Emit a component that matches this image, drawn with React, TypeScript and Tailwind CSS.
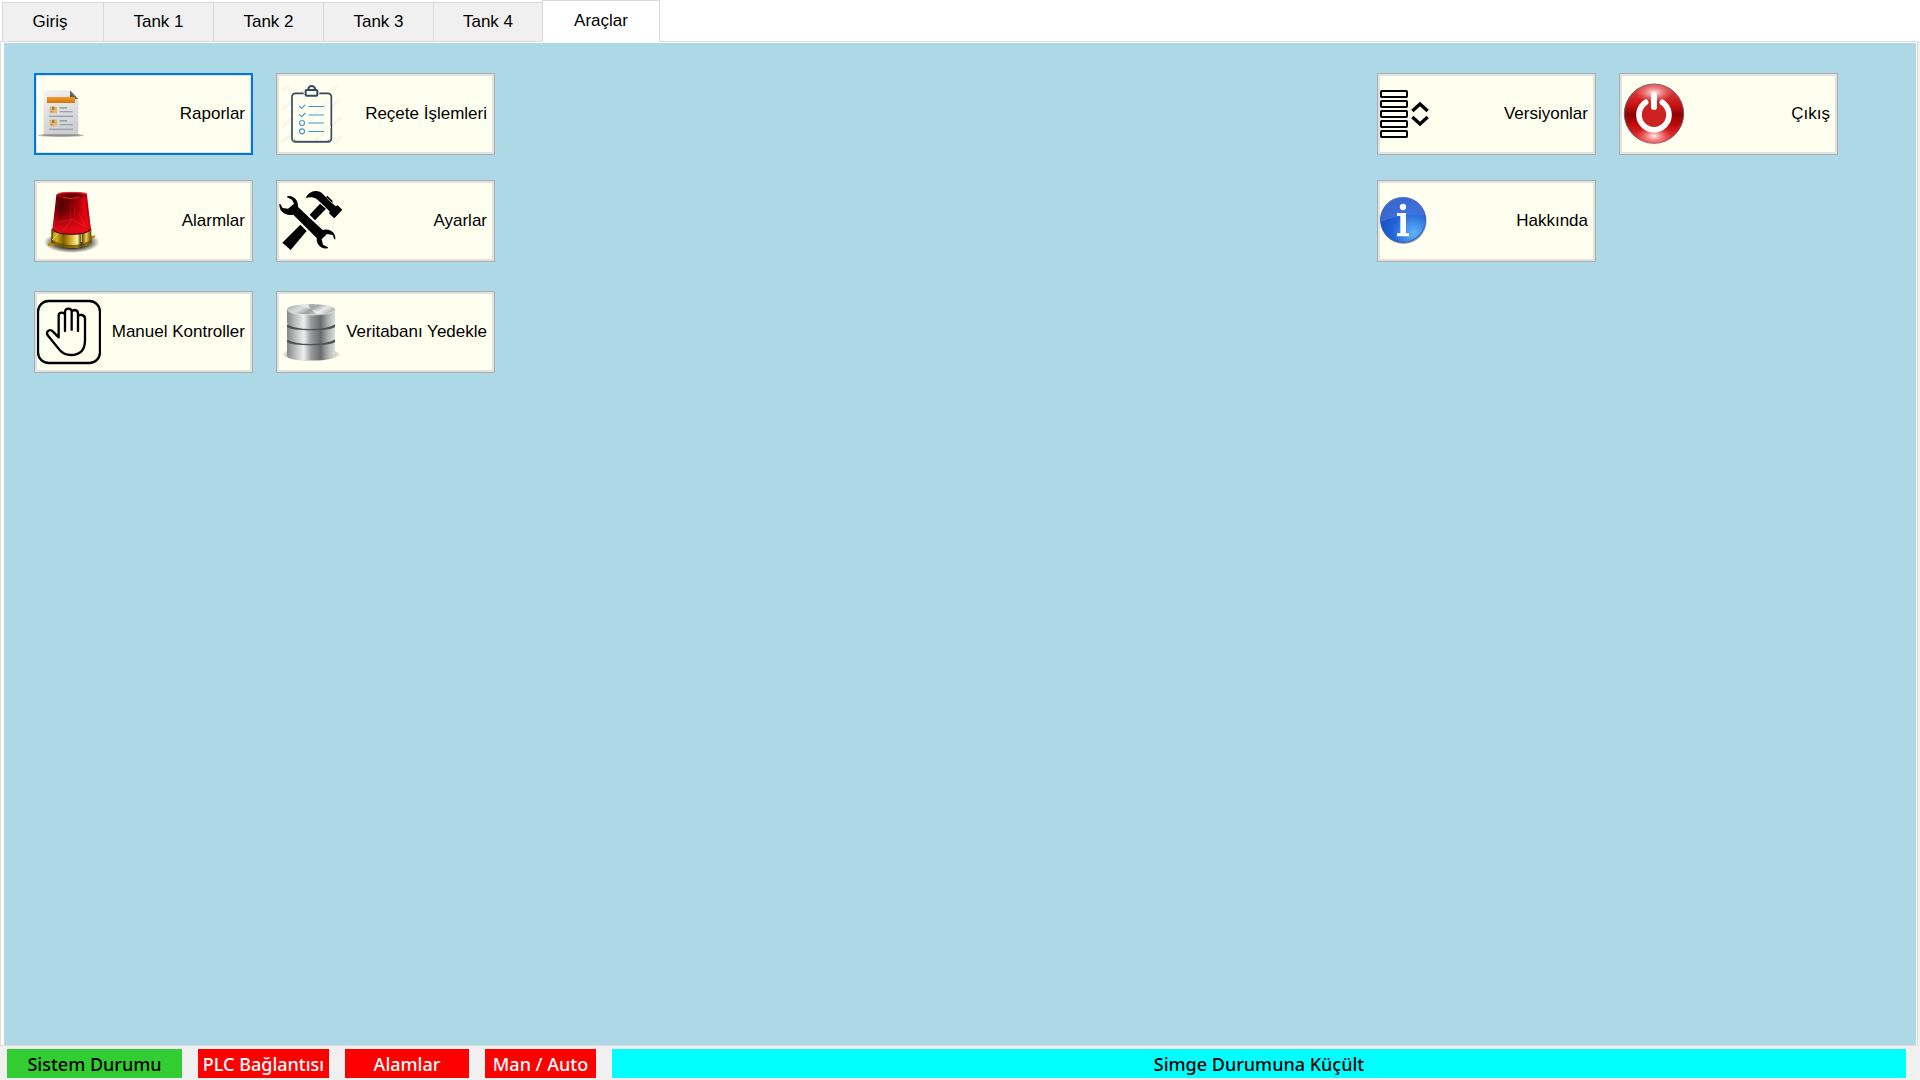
import React from "react";

const ICON = "h-[76px] w-16 shrink-0";

function ReportIcon() {
  return (
    <svg className={ICON} viewBox="39 36 192 228" aria-hidden="true">
      <defs>
        <linearGradient id="rp-paper" x1="0" y1="0" x2="0.3" y2="1">
          <stop offset="0" stopColor="#f3f3f3" />
          <stop offset="1" stopColor="#cfcfd1" />
        </linearGradient>
        <linearGradient id="rp-bar" x1="0" y1="0" x2="0" y2="1">
          <stop offset="0" stopColor="#f09a2c" />
          <stop offset="1" stopColor="#d17a08" />
        </linearGradient>
        <linearGradient id="rp-fold" x1="0" y1="1" x2="1" y2="0">
          <stop offset="0" stopColor="#444" />
          <stop offset="1" stopColor="#999" />
        </linearGradient>
      </defs>
      <ellipse cx="111" cy="214" rx="69" ry="5" fill="#b9b9b4" />
      <ellipse cx="111" cy="213" rx="58" ry="4" fill="#8f8f8c" />
      <path d="M59 84q0-5 5-5h74l25 25v103q0 4-4 4H63q-4 0-4-4z" fill="url(#rp-paper)" />
      <path d="M138 79l25 26h-25z" fill="url(#rp-fold)" />
      <rect x="69" y="99" width="84" height="18" fill="url(#rp-bar)" />
      {[128, 167].map((y) => (
        <g key={y}>
          <rect x="77" y={y} width="22" height="20" rx="2" fill="#e2b775" />
          <rect x="84" y={y} width="7" height="10" fill="#a67a3c" />
          <rect x="80" y={y + 13} width="5" height="4" fill="#a68450" />
          <g fill="#93a5ac">
            <rect x="107" y={y + 1} width="22" height="5" />
            <rect x="107" y={y + 13} width="39" height="4" />
            <rect x="75" y={y + 27} width="72" height="4" />
          </g>
        </g>
      ))}
    </svg>
  );
}

function RecipeIcon() {
  return (
    <svg className={ICON} viewBox="39 36 192 228" fill="none" aria-hidden="true">
      <path
        d="M48 82l20-18M48 138l84-76M48 190l84-80M48 236L216 64M180 150l40-44M180 202l46-44M206 240l20-22"
        stroke="#f6f6e9"
        strokeWidth="10"
      />
      <rect x="78" y="88" width="118" height="146" rx="10" fill="#fffff0" stroke="#34495e" strokeWidth="5" />
      <path d="M90 212L186 112M150 228l42-42" stroke="#f8f8ea" strokeWidth="10" />
      <path d="M84 227q3 5 10 5h88q6 0 9-5" stroke="#34495e" strokeWidth="3" />
      <path d="M113 86h47" stroke="#fffff0" strokeWidth="8" />
      <path d="M127 77v-2a10 9 0 0 1 20 0v2" stroke="#34495e" strokeWidth="6" />
      <rect x="119" y="78" width="35" height="17" rx="3" fill="#fffff0" stroke="#34495e" strokeWidth="6" />
      <path d="M99 126l8 7 11-11M99 151l8 7 11-11" stroke="#4a9bd2" strokeWidth="3.5" />
      <circle cx="108" cy="177" r="7.5" stroke="#4a9bd2" strokeWidth="3.5" />
      <circle cx="108" cy="202" r="7.5" stroke="#4a9bd2" strokeWidth="3.5" />
      <path d="M127 127.500h47M127 202.500h47" stroke="#3f95d0" strokeWidth="3" />
      <path d="M127 153h47M127 177h47" stroke="#9ccbe8" strokeWidth="6" />
    </svg>
  );
}

function AlarmIcon() {
  return (
    <svg className={ICON} viewBox="39 33 192 228" aria-hidden="true">
      <defs>
        <linearGradient id="al-red" x1="0" x2="1">
          <stop offset="0" stopColor="#98000a" />
          <stop offset="0.2" stopColor="#520002" />
          <stop offset="0.4" stopColor="#700003" />
          <stop offset="0.65" stopColor="#a00006" />
          <stop offset="0.82" stopColor="#e8000e" />
          <stop offset="1" stopColor="#90000a" />
        </linearGradient>
        <linearGradient id="al-low" x1="0" y1="0" x2="0" y2="1">
          <stop offset="0.4" stopColor="#e8000c" stopOpacity="0" />
          <stop offset="0.85" stopColor="#ea0c18" stopOpacity="0.85" />
        </linearGradient>
        <linearGradient id="al-gold" x1="0" x2="1">
          <stop offset="0" stopColor="#4a3500" />
          <stop offset="0.12" stopColor="#d9b41a" />
          <stop offset="0.3" stopColor="#7d5c00" />
          <stop offset="0.5" stopColor="#d6b230" />
          <stop offset="0.65" stopColor="#fff2a8" />
          <stop offset="0.75" stopColor="#3c2b00" />
          <stop offset="0.87" stopColor="#f0d050" />
          <stop offset="1" stopColor="#5a4000" />
        </linearGradient>
        <radialGradient id="al-shadow">
          <stop offset="0.5" stopColor="#000" stopOpacity="0.9" />
          <stop offset="1" stopColor="#000" stopOpacity="0" />
        </radialGradient>
      </defs>
      <ellipse cx="143" cy="211" rx="84" ry="32" fill="url(#al-shadow)" />
      <path d="M70 216l14-9 8 13-18 3zM198 193l17-3-5 9-14 3z" fill="#b18a10" />
      <path d="M82 170q60 30 120 0v42q-20 16-58 16t-62-16z" fill="url(#al-gold)" />
      <path d="M84 205q30 14 60 14t58-16v9q-20 16-58 16t-60-16z" fill="#6a4e00" opacity="0.75" />
      <path d="M84 204l20-20M90 184v22M172 186v24" stroke="#f7d94a" strokeWidth="3" />
      <path d="M97 69q2-9 50-9t42 9l11 99q2 8-10 12-22 8-50 7-34-1-50-9-5-3-4-10z" fill="url(#al-red)" />
      <path d="M97 69q2-9 50-9t42 9l11 99q2 8-10 12-22 8-50 7-34-1-50-9-5-3-4-10z" fill="url(#al-low)" />
      <path d="M86 170q6 17 56 17 52 0 58-17" fill="none" stroke="#3a0608" strokeWidth="3" />
      <ellipse cx="143" cy="71" rx="44" ry="11" fill="#a9000a" />
      <ellipse cx="143" cy="72" rx="33" ry="8" fill="#670004" />
      <path d="M100 68q8-7 43-7t44 7M117 75q20 8 50 0" fill="none" stroke="#f63340" strokeWidth="2.5" />
      <path d="M140 98v52M152 98v50" stroke="#d3121c" strokeWidth="3" opacity="0.6" />
      <path d="M108 150l36-8 40 22M144 142l-28 36M184 108l8 54M164 122l20 44" fill="none" stroke="#ff3040" strokeWidth="2.500" opacity="0.45" />
    </svg>
  );
}

function ToolsIcon() {
  return (
    <svg className={ICON} viewBox="39 33 192 228" aria-hidden="true">
      <path d="M49 212l54-54 19 19-48 57z" />
      <path d="M131 128l31-33 18 15-33 35z" />
      <path d="M119 78q9-20 30-21 14 0 22 10l9 9 4-5 16 16-1 7 10 9 6-3 14 13-24 26-15-14v-8l-32-31q-15-15-38-8z" />
      <path d="M181 77l18 17" stroke="#fffff0" strokeWidth="2" />
      <path
        d="M40 96q-1 22 18 30 12 5 24 2l70 70q-1 18 12 27 10 6 21 4l1-3-15-8-4-16 16-16 17 3 5 13h3q1-17-12-25-12-7-26-3L96 106q1-23-15-31-9-4-17-2l-1 3 15 7 6 12-18 15-16-2-7-12z"
        stroke="#fffff0"
        strokeWidth="4"
        paintOrder="stroke"
      />
      <path d="M84 108l82 82" stroke="#000" strokeWidth="21" />
    </svg>
  );
}

function HandIcon() {
  return (
    <svg
      className={ICON}
      viewBox="39 36 192 228"
      fill="none"
      stroke="#000"
      strokeWidth="7"
      strokeLinecap="round"
      strokeLinejoin="round"
      aria-hidden="true"
    >
      <rect x="42" y="57" width="186" height="186" rx="32" />
      <path d="M104 166V100q1-8 9-8 8 0 10 7v48M123 99V89q1-9 10-9 9 0 10 8v55M143 90q2-6 9-6 10 1 10 10v53M162 103q3-5 11-4 9 1 10 10v67q-1 43-43 43-20 0-33-15l-36-44q-5-9 2-14 7-4 14 3l17 17" />
    </svg>
  );
}

function DatabaseIcon() {
  const discs = [168, 123, 76];
  return (
    <svg className={ICON} viewBox="39 36 192 228" aria-hidden="true">
      <defs>
        <linearGradient id="db-side" x1="0" x2="1">
          <stop offset="0" stopColor="#858787" />
          <stop offset="0.15" stopColor="#b5b7b7" />
          <stop offset="0.35" stopColor="#eeeeee" />
          <stop offset="0.5" stopColor="#989b9b" />
          <stop offset="0.7" stopColor="#686b6b" />
          <stop offset="0.85" stopColor="#aeb0b0" />
          <stop offset="1" stopColor="#dcdcdc" />
        </linearGradient>
        <linearGradient id="db-top" x1="0" x2="1" y1="0.3" y2="0.7">
          <stop offset="0" stopColor="#b2b4b4" />
          <stop offset="0.3" stopColor="#dedede" />
          <stop offset="0.5" stopColor="#a3a5a5" />
          <stop offset="0.72" stopColor="#e9e9e9" />
          <stop offset="1" stopColor="#a3a5a5" />
        </linearGradient>
        <radialGradient id="db-shadow">
          <stop offset="0.6" stopColor="#000" stopOpacity="0.5" />
          <stop offset="1" stopColor="#000" stopOpacity="0" />
        </radialGradient>
      </defs>
      <ellipse cx="135" cy="217" rx="88" ry="21" fill="url(#db-shadow)" />
      {discs.map((y, i) => (
        <g key={y}>
          <path
            d={`M63 ${y + 9}q0-4 8-8h128q8 4 8 8v${i === 0 ? 44 : 36}q0 14-72 14t-72-14z`}
            fill="url(#db-side)"
          />
          {i < 2 && <path d={`M63 ${y + 4}q20 14 72 14t72-14v8q-12 10-72 10t-72-10z`} fill="#505252" />}
        </g>
      ))}
      <ellipse cx="135" cy="82" rx="72" ry="16" fill="url(#db-top)" />
      <path d="M135 82l-40-13 28-3zM135 82l46 12-28 4z" fill="#f4f4f4" opacity="0.5" />
      <path d="M135 82l-8-16h20zM135 82l-20 15h36z" fill="#808282" opacity="0.4" />
      <path d="M64 83q6 16 71 16t71-16" fill="none" stroke="#ededed" strokeWidth="2" />
    </svg>
  );
}

function VersionsIcon() {
  return (
    <svg className={ICON} viewBox="42 36 192 228" fill="none" stroke="#000" aria-hidden="true">
      {[81, 111, 141, 171, 201].map((y) => (
        <rect key={y} x="45" y={y} width="78" height="18" rx="2" strokeWidth="6" />
      ))}
      <path d="M139 141l23-21 23 21M139 159l23 21 23-21" strokeWidth="10" />
    </svg>
  );
}

function InfoIcon() {
  return (
    <svg className={ICON} viewBox="42 357 192 228" aria-hidden="true">
      <defs>
        <radialGradient id="in-blue" cx="0.75" cy="0.8" r="0.8">
          <stop offset="0" stopColor="#5fb4fb" />
          <stop offset="0.6" stopColor="#2464d8" />
          <stop offset="1" stopColor="#1a50c8" />
        </radialGradient>
      </defs>
      <circle cx="113" cy="471" r="69" fill="#a9abae" />
      <circle cx="111" cy="468" r="69" fill="#2f5fb8" />
      <circle cx="111" cy="468" r="66" fill="url(#in-blue)" />
      <path d="M45 475a66 66 0 0 1 131-20q-40-8-78 2-34 8-53 18z" fill="#5f86dc" opacity="0.45" />
      <circle cx="111" cy="429" r="9.500" fill="#fff" />
      <path d="M93 447h27v61h9v9H93v-9h10v-52H93z" fill="#fff" />
    </svg>
  );
}

function PowerIcon() {
  return (
    <svg className={ICON} viewBox="48 36 192 228" aria-hidden="true">
      <defs>
        <linearGradient id="pw-red" x1="0" y1="0" x2="0" y2="1">
          <stop offset="0" stopColor="#e05050" />
          <stop offset="0.35" stopColor="#c81414" />
          <stop offset="0.52" stopColor="#8f0000" />
          <stop offset="0.7" stopColor="#c40c0c" />
          <stop offset="1" stopColor="#f04040" />
        </linearGradient>
        <radialGradient id="pw-hi">
          <stop offset="0" stopColor="#fff" stopOpacity="0.95" />
          <stop offset="1" stopColor="#ff8080" stopOpacity="0" />
        </radialGradient>
      </defs>
      <circle cx="144" cy="149" r="89" fill="url(#pw-red)" stroke="#6d5a7c" strokeWidth="3" />
      <ellipse cx="144" cy="86" rx="56" ry="30" fill="url(#pw-hi)" />
      <ellipse cx="144" cy="216" rx="54" ry="30" fill="url(#pw-hi)" />
      <circle cx="144" cy="150" r="38" fill="#cc2222" />
      <path d="M119 115a45 45 0 1 0 50 0" fill="none" stroke="#fff" strokeWidth="17" strokeLinecap="round" />
      <path d="M144 95v34" stroke="#fff" strokeWidth="18" strokeLinecap="round" />
    </svg>
  );
}

function ToolButton({ label, icon, focused = false }: { label: string; icon: React.ReactNode; focused?: boolean }) {
  const frame = focused
    ? "border-2 border-[#0078d7] outline-none ring-1 ring-inset ring-[#e1e1e1] p-px"
    : "border border-[#adadad] ring-2 ring-inset ring-[#e1e1e1] p-[2px]";
  return (
    <button type="button" className={`flex h-[82px] w-[219px] items-center justify-between bg-[#fffff0] text-[17px] text-black ${frame}`}>
      {icon}
      <span className="pr-[5px] whitespace-nowrap">{label}</span>
    </button>
  );
}

const tabs = [
  { label: "Giriş", width: "w-[102px] pr-[6px]" },
  { label: "Tank 1", width: "w-[111px]" },
  { label: "Tank 2", width: "w-[111px]" },
  { label: "Tank 3", width: "w-[111px]" },
  { label: "Tank 4", width: "w-[110px]" },
];

export default function App() {
  return (
    <div className="flex h-screen flex-col bg-[#f0f0f0] font-['Liberation_Sans',Arial,sans-serif] text-black">
      <div role="tablist" className="flex h-[41px] items-end bg-white pl-[2px] text-[17px]">
        {tabs.map((t) => (
          <button
            key={t.label}
            type="button"
            role="tab"
            aria-selected="false"
            className={`-mr-px h-[39px] border border-b-0 border-[#d9d9d9] bg-[#f0f0f0] ${t.width}`}
          >
            {t.label}
          </button>
        ))}
        <button
          type="button"
          role="tab"
          aria-selected="true"
          className="relative -mb-px h-[42px] w-[118px] border border-b-0 border-[#d9d9d9] bg-white pb-[2px]"
        >
          Araçlar
        </button>
      </div>

      <main className="mr-[2px] flex flex-1 border border-[#dcdcdc] bg-white pt-px pr-px pl-[3px]">
        <div className="flex flex-1 items-start justify-between bg-[#add8e6] pt-[30px] pr-[78px] pl-[30px]">
          <div className="flex flex-col">
            <div className="flex gap-[23px]">
              <ToolButton label="Raporlar" icon={<ReportIcon />} focused />
              <ToolButton label="Reçete İşlemleri" icon={<RecipeIcon />} />
            </div>
            <div className="mt-[25px] flex gap-[23px]">
              <ToolButton label="Alarmlar" icon={<AlarmIcon />} />
              <ToolButton label="Ayarlar" icon={<ToolsIcon />} />
            </div>
            <div className="mt-[29px] flex gap-[23px]">
              <ToolButton label="Manuel Kontroller" icon={<HandIcon />} />
              <ToolButton label="Veritabanı Yedekle" icon={<DatabaseIcon />} />
            </div>
          </div>
          <div className="flex flex-col gap-[25px]">
            <div className="flex gap-[23px]">
              <ToolButton label="Versiyonlar" icon={<VersionsIcon />} />
              <ToolButton label="Çıkış" icon={<PowerIcon />} />
            </div>
            <ToolButton label="Hakkında" icon={<InfoIcon />} />
          </div>
        </div>
      </main>

      <footer className="flex gap-4 pt-[3px] pr-[14px] pb-[2px] pl-[7px] text-center font-['Noto_Sans','Open_Sans',sans-serif] text-lg leading-[27px] font-medium whitespace-nowrap">
        <div className="w-[175px] bg-[#32cd32] pt-[2px]">Sistem Durumu</div>
        <div className="w-[131px] bg-[#ff0000] pt-[2px] text-white">PLC Bağlantısı</div>
        <div className="w-[124px] bg-[#ff0000] pt-[2px] text-white">Alamlar</div>
        <div className="w-[111px] bg-[#ff0000] pt-[2px] text-white">Man / Auto</div>
        <button type="button" className="flex-1 bg-[#00ffff] pt-[2px]">
          Simge Durumuna Küçült
        </button>
      </footer>
    </div>
  );
}
